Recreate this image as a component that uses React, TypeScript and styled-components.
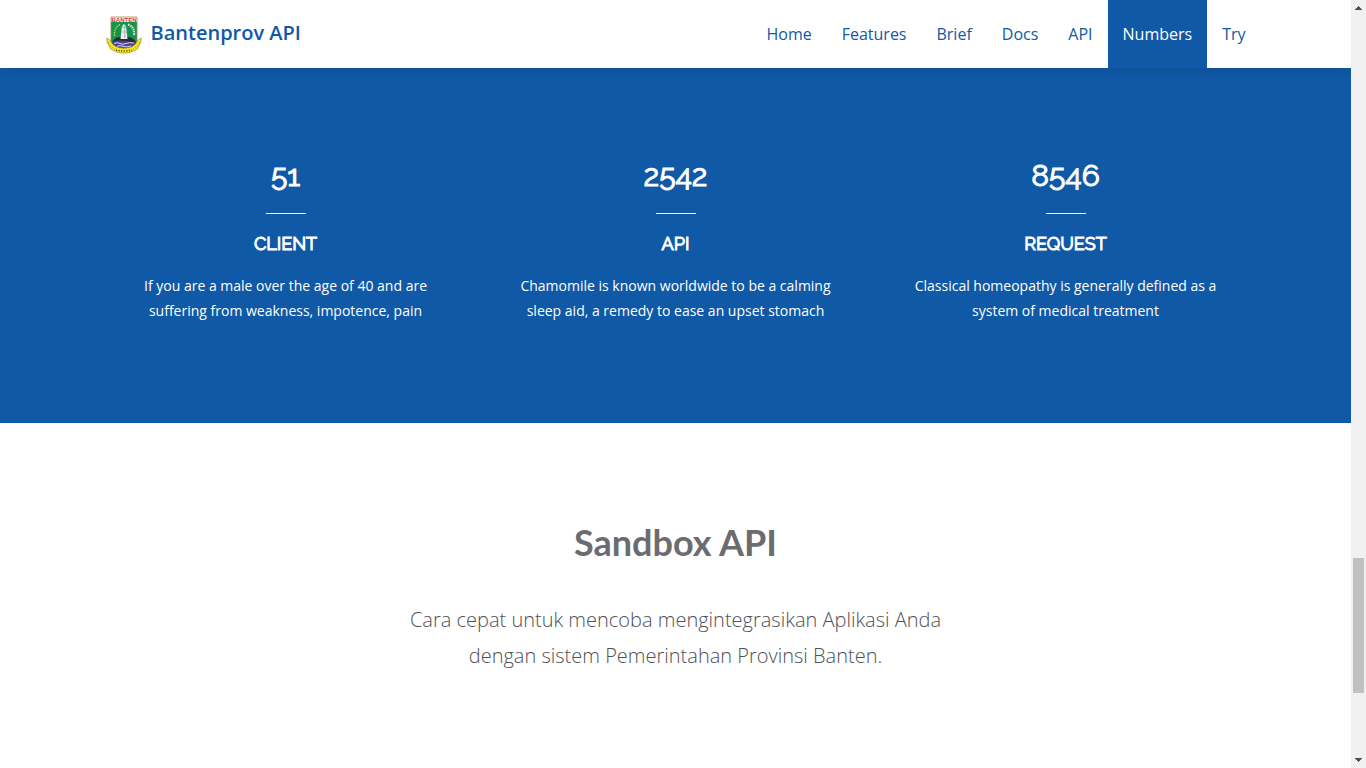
import React from 'react';
import styled, { createGlobalStyle, css } from 'styled-components';

const BLUE = '#1059a6';

const GlobalStyle = createGlobalStyle`
  * { box-sizing: border-box; }
  body {
    margin: 0;
    background: #fff;
    font-family: "Open Sans", "Noto Sans", sans-serif;
    font-size: 14px;
    color: #6b6c70;
  }
  h2, h3, h4, p, ul { margin: 0; padding: 0; }
`;

const Shell = styled.div`
  display: flex;
  align-items: flex-start;
  min-height: 100vh;
`;

const Page = styled.div`
  flex: 1;
  min-width: 0;
`;

const Container = styled.div`
  width: 100%;
  max-width: 1170px;
  margin: 0 auto;
`;

const Header = styled.header`
  position: sticky;
  top: 0;
  z-index: 1;
  background: #fff;
  box-shadow: 0 0 12px rgba(0, 0, 0, 0.15);
`;

const HeaderRow = styled(Container)`
  display: flex;
  justify-content: space-between;
`;

const Brand = styled.a`
  display: flex;
  align-items: center;
  gap: 9px;
  padding: 2px 0 0 15px;
  color: ${BLUE};
  font-size: 20px;
  font-weight: 600;
  line-height: 28px;
  text-decoration: none;
  white-space: nowrap;
`;

const BrandName = styled.span`
  padding-bottom: 4px;
`;

const NavList = styled.ul`
  display: flex;
  list-style: none;
`;

const NavLink = styled.a<{ $active?: boolean }>`
  display: block;
  padding: 0 15px;
  color: ${BLUE};
  font-size: 16px;
  line-height: 68px;
  text-decoration: none;
  ${(p) =>
    p.$active &&
    css`
      background: ${BLUE};
      color: #fff;
    `}
`;

const NumbersSection = styled.section`
  padding: 88px 0 100px;
  background: ${BLUE};
  color: #fff;
`;

const NumbersGrid = styled(Container)`
  display: grid;
  grid-template-columns: repeat(3, 1fr);
`;

const NumberCard = styled.article`
  display: flex;
  flex-direction: column;
  align-items: center;
  padding: 0 30px;
  text-align: center;
`;

const Count = styled.h3`
  font-family: Raleway, Lato, sans-serif;
  font-size: 30px;
  font-weight: 400;
  -webkit-text-stroke: 1px currentColor;
  font-variant-numeric: oldstyle-nums proportional-nums;
  line-height: 40px;
`;

const Rule = styled.div`
  width: 40px;
  height: 1px;
  margin: 17px 0 18px;
  background: #fff;
`;

const CardTitle = styled.h4`
  margin-bottom: 17px;
  font-family: Raleway, Lato, sans-serif;
  font-size: 18px;
  font-weight: 400;
  -webkit-text-stroke: 1px currentColor;
  line-height: 24px;
  text-transform: uppercase;
`;

const CardText = styled.p`
  line-height: 25px;
`;

const SandboxSection = styled.section`
  padding: 97px 15px;
  text-align: center;
`;

const SandboxTitle = styled.h2`
  margin-bottom: 38px;
  font-family: Lato, sans-serif;
  font-size: 36px;
  font-weight: 700;
  line-height: 44px;
`;

const SandboxText = styled.p`
  max-width: 570px;
  margin: 0 auto;
  color: #505155;
  font-size: 20px;
  font-weight: 300;
  line-height: 36px;
`;

const ScrollTrack = styled.div`
  position: sticky;
  top: 0;
  z-index: 2;
  display: flex;
  flex-direction: column;
  align-items: center;
  width: 15px;
  height: 100vh;
  background: #f1f1f1;
`;

const ScrollArrow = styled.svg`
  display: block;
  flex: none;
  width: 15px;
  height: 15px;
  fill: #505050;
`;

const ScrollSpace = styled.div<{ $share: number }>`
  flex: ${(p) => p.$share} 0 0;
`;

const ScrollThumb = styled(ScrollSpace)`
  width: 11px;
  background: #c1c1c1;
`;

function Logo() {
  return (
    <svg width="36" height="38" viewBox="0 0 36 38" aria-hidden="true">
      <path d="M5 1H31V25Q31 33 18 36Q5 33 5 25Z" fill="#11964f" stroke="#a58c48" strokeWidth="0.8" />
      <path d="M5.4 1.4H30.6V6H5.4Z" fill="#fff" />
      <text x="18" y="5.7" textAnchor="middle" fontFamily="Liberation Sans" fontSize="6" fontWeight="700" fill="#e5303a">
        BANTEN
      </text>
      <path d="M14 8.500Q7.500 12 8.500 20" fill="none" stroke="#b8cf48" strokeWidth="1.500" strokeDasharray="1.500 0.900" />
      <path d="M22 8.500Q29 11 28 20" fill="none" stroke="#f5e4e0" strokeWidth="2.200" strokeDasharray="1.500 0.800" />
      <path d="M23.500 9Q27.500 12 27 18" fill="none" stroke="#d9534c" strokeWidth="0.700" strokeDasharray="1 1.300" />
      <path d="M6 26Q10 20 15 21.500L22 21Q27 21.500 30 26V29H6Z" fill="#2c2930" />
      <path d="M14.500 23L15.700 12L17 8.500H19L20.300 12L21.500 23Z" fill="#eef0ee" />
      <path d="M15.500 11.500H20.500M15.500 16H21" stroke="#a6b0b3" strokeWidth="0.800" />
      <path d="M18.800 9V22" stroke="#9aa9b0" strokeWidth="0.900" />
      <path d="M5 26Q12 23.500 18 25T31 26V29Q24 33 18 33Q11 33 5 29Z" fill="#4b4496" />
      <path d="M8 27.500Q11 26 14 27.500T20 27.500T28 27M11 30.300Q14 29 17 30.300T25 30" fill="none" stroke="#e8e8f5" strokeWidth="0.900" />
      <path d="M0.700 22L4.500 24.500Q7 32 18 32.300Q29 32 31.500 24.500L35.300 22Q35.500 27 33 29.500L31.500 33Q25 37.300 18 37.300Q11 37.300 4.500 33L3 29.500Q0.500 27 0.700 22Z" fill="#f7e61e" stroke="#8f8432" strokeWidth="0.600" />
      <path d="M2.500 26.500Q4 31 9 33M33.500 26.500Q32 31 27 33" fill="none" stroke="#6d6524" strokeWidth="0.700" strokeDasharray="1.300 1.600" />
      <path d="M10 34Q18 36 26 34" fill="none" stroke="#4c471f" strokeWidth="1.600" strokeDasharray="1.100 1.500" />
    </svg>
  );
}

const links = ['Home', 'Features', 'Brief', 'Docs', 'API', 'Numbers', 'Try'];

const numbers = [
  {
    count: 51,
    title: 'Client',
    text: 'If you are a male over the age of 40 and are suffering from weakness, impotence, pain',
  },
  {
    count: 2542,
    title: 'API',
    text: 'Chamomile is known worldwide to be a calming sleep aid, a remedy to ease an upset stomach',
  },
  {
    count: 8546,
    title: 'Request',
    text: 'Classical homeopathy is generally defined as a system of medical treatment',
  },
];

export default function App() {
  return (
    <>
      <GlobalStyle />
      <Shell>
        <Page>
          <Header>
            <HeaderRow>
              <Brand href="#home">
                <Logo />
                <BrandName>Bantenprov API</BrandName>
              </Brand>
              <nav>
                <NavList>
                  {links.map((name) => (
                    <li key={name}>
                      <NavLink href={`#${name.toLowerCase()}`} $active={name === 'Numbers'}>
                        {name}
                      </NavLink>
                    </li>
                  ))}
                </NavList>
              </nav>
            </HeaderRow>
          </Header>
          <main>
            <NumbersSection id="numbers">
              <NumbersGrid>
                {numbers.map((n) => (
                  <NumberCard key={n.title}>
                    <Count>{n.count}</Count>
                    <Rule />
                    <CardTitle>{n.title}</CardTitle>
                    <CardText>{n.text}</CardText>
                  </NumberCard>
                ))}
              </NumbersGrid>
            </NumbersSection>
            <SandboxSection id="try">
              <SandboxTitle>Sandbox API</SandboxTitle>
              <SandboxText>
                Cara cepat untuk mencoba mengintegrasikan Aplikasi Anda dengan sistem Pemerintahan Provinsi Banten.
              </SandboxText>
            </SandboxSection>
          </main>
        </Page>
        <ScrollTrack aria-hidden="true">
          <ScrollArrow viewBox="0 0 15 15">
            <path d="M7 6H8V7H9V8H10V9H11V10H4V9H5V8H6V7H7Z" />
          </ScrollArrow>
          <ScrollSpace $share={543} />
          <ScrollThumb $share={135} />
          <ScrollSpace $share={60} />
          <ScrollArrow viewBox="0 0 15 15">
            <path d="M4 5H11V6H10V7H9V8H8V9H7V8H6V7H5V6H4Z" />
          </ScrollArrow>
        </ScrollTrack>
      </Shell>
    </>
  );
}
